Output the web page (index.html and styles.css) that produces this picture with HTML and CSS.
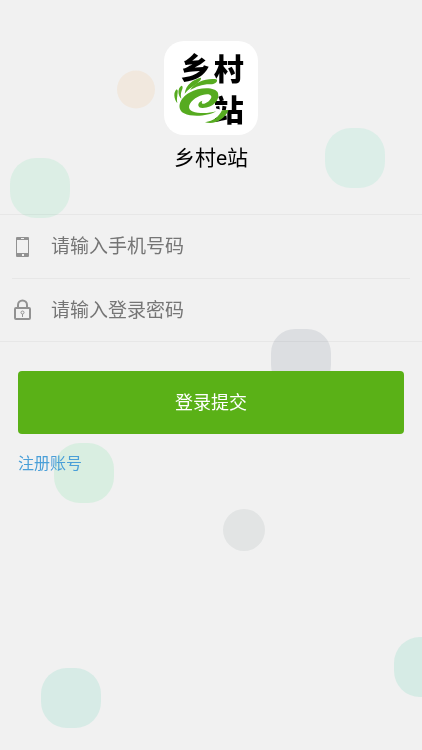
FILE: index.html
```html
<!DOCTYPE html>
<html lang="zh-CN">
<head>
<meta charset="utf-8">
<meta name="viewport" content="width=device-width, initial-scale=1">
<title>乡村e站</title>
<link rel="stylesheet" href="styles.css">
</head>
<body>
<svg class="backdrop" viewBox="0 0 422 750" preserveAspectRatio="xMidYMid slice" aria-hidden="true">
  <circle cx="136" cy="89.500" r="19" fill="#f1e8de"/>
  <rect x="10" y="158" width="60" height="60" rx="26" fill="#dceee5"/>
  <rect x="325" y="128" width="60" height="60" rx="26" fill="#dceee8"/>
  <rect x="271" y="329" width="60" height="60" rx="24" fill="#dcdee1"/>
  <rect x="54" y="443" width="60" height="60" rx="26" fill="#d9eee1"/>
  <circle cx="244" cy="530" r="21" fill="#e2e4e4"/>
  <rect x="394" y="637" width="60" height="60" rx="26" fill="#d6ebe5"/>
  <rect x="41" y="668" width="60" height="60" rx="26" fill="#d7ebe6"/>
</svg>
<main class="page">
  <header class="brand">
    <svg class="logo" viewBox="-18 -15 282 282" role="img" aria-label="乡村e站">
      <g class="logo-text">
        <text x="31" y="99">乡</text>
        <text x="131" y="101">村</text>
        <text x="131" y="224">站</text>
      </g>
      <path class="logo-halo" d="M32 172C38 140 70 114 132 106L146 146L124 184L172 196L120 226L46 202Z"/>
      <g class="logo-leaf">
        <path d="M139 196C115 210 68 215 42 202C18 188 28 157 58 140C90 122 137 123 144 141C150 163 130 184 98 186C80 186 81 168 97 164C93 172 97 176 106 172C122 164 130 150 119 146C103 141 71 155 60 173C50 191 67 200 92 201C109 202 124 200 139 196Z"/>
        <path d="M44 143C47 115 71 100 92 95C97 98 87 107 80 113C67 122 54 130 44 143Z"/>
        <path d="M60 133C76 106 111 96 139 100C146 105 136 114 126 115C102 113 78 121 60 133Z"/>
        <path d="M34 158C22 146 23 127 34 119C40 119 38 129 35 134C32 142 32 149 34 158Z"/>
        <path d="M22 172C11 158 10 138 20 130C26 132 22 144 22 150C20 158 21 164 22 172Z"/>
        <path d="M105 229C131 225 147 212 156 193L176 192C164 219 134 238 105 229Z"/>
      </g>
    </svg>
    <h1 class="name">乡村e站</h1>
  </header>
  <form class="login">
    <div class="fields">
      <div class="field">
        <label class="icon" for="phone" aria-label="手机号码">
          <svg viewBox="0 0 20 24" aria-hidden="true">
            <path fill="#929292" fill-rule="evenodd" d="M4 2h11q1 0 1 1v18q0 1-1 1H4q-1 0-1-1V3q0-1 1-1zm0 3v13h11V5zM8 3v1h3V3zM9 19v2h2v-2z"/>
          </svg>
        </label>
        <input id="phone" type="tel" placeholder="请输入手机号码">
      </div>
      <div class="field">
        <label class="icon" for="password" aria-label="登录密码">
          <svg viewBox="0 0 20 24" fill="none" stroke="#929292" aria-hidden="true">
            <rect x="2" y="10" width="15" height="11" rx="1" stroke-width="2"/>
            <path d="M5 10V7a4.500 4.500 0 0 1 9 0v3" stroke-width="2"/>
            <circle cx="9.500" cy="14.500" r="1.500"/>
            <path d="M9.500 16V19"/>
          </svg>
        </label>
        <input id="password" type="password" placeholder="请输入登录密码">
      </div>
    </div>
    <div class="actions">
      <button class="submit" type="submit">登录提交</button>
      <a class="register" href="#">注册账号</a>
    </div>
  </form>
</main>
</body>
</html>
```
FILE: styles.css
```css
* {
  box-sizing: border-box;
}

body {
  margin: 0;
  min-height: 100vh;
  background: #f1f1f1;
  font-family: Roboto, "Noto Sans CJK SC", sans-serif;
}

.backdrop {
  position: fixed;
  inset: 0;
  z-index: -1;
  width: 100%;
  height: 100%;
}

.page {
  padding-top: 41px;
}

.brand {
  display: flex;
  flex-direction: column;
  align-items: center;
  gap: 7px;
}

.logo {
  width: 94px;
  height: 94px;
  border-radius: 20px;
  background: #fff;
}

.logo-text {
  font-family: "Noto Sans CJK SC", sans-serif;
  font-size: 90px;
  font-weight: 900;
}

.logo-halo {
  fill: #fff;
}

.logo-leaf {
  fill: #56ab20;
}

.name {
  margin: 0;
  font-size: 21px;
  font-weight: 400;
  line-height: 32px;
  color: #000;
}

.fields {
  margin-top: 40px;
  border-top: 1px solid rgba(0, 0, 0, 0.04);
  border-bottom: 1px solid rgba(0, 0, 0, 0.04);
}

.field {
  display: flex;
  align-items: center;
  gap: 18px;
  height: 63px;
  margin: 0 12px;
  padding-left: 1px;
}

.field + .field {
  border-top: 1px solid rgba(0, 0, 0, 0.04);
}

.icon {
  display: flex;
}

.icon svg {
  width: 20px;
  height: 24px;
}

.field input {
  flex: 1;
  min-width: 0;
  height: 100%;
  padding: 0;
  border: 0;
  outline: 0;
  background: none;
  font: inherit;
  font-size: 19px;
  color: #333;
}

.field input::placeholder {
  color: #757575;
  opacity: 1;
}

.actions {
  display: flex;
  flex-direction: column;
  align-items: flex-start;
  gap: 18px;
  padding: 29px 18px;
}

.submit {
  width: 100%;
  height: 63px;
  padding: 0 0 4px;
  border: 0;
  border-radius: 4px;
  background: #5ab117;
  font: inherit;
  font-size: 18px;
  color: #fff;
}

.register {
  font-size: 16px;
  line-height: 24px;
  color: #4a9fd8;
  text-decoration: none;
}
```
